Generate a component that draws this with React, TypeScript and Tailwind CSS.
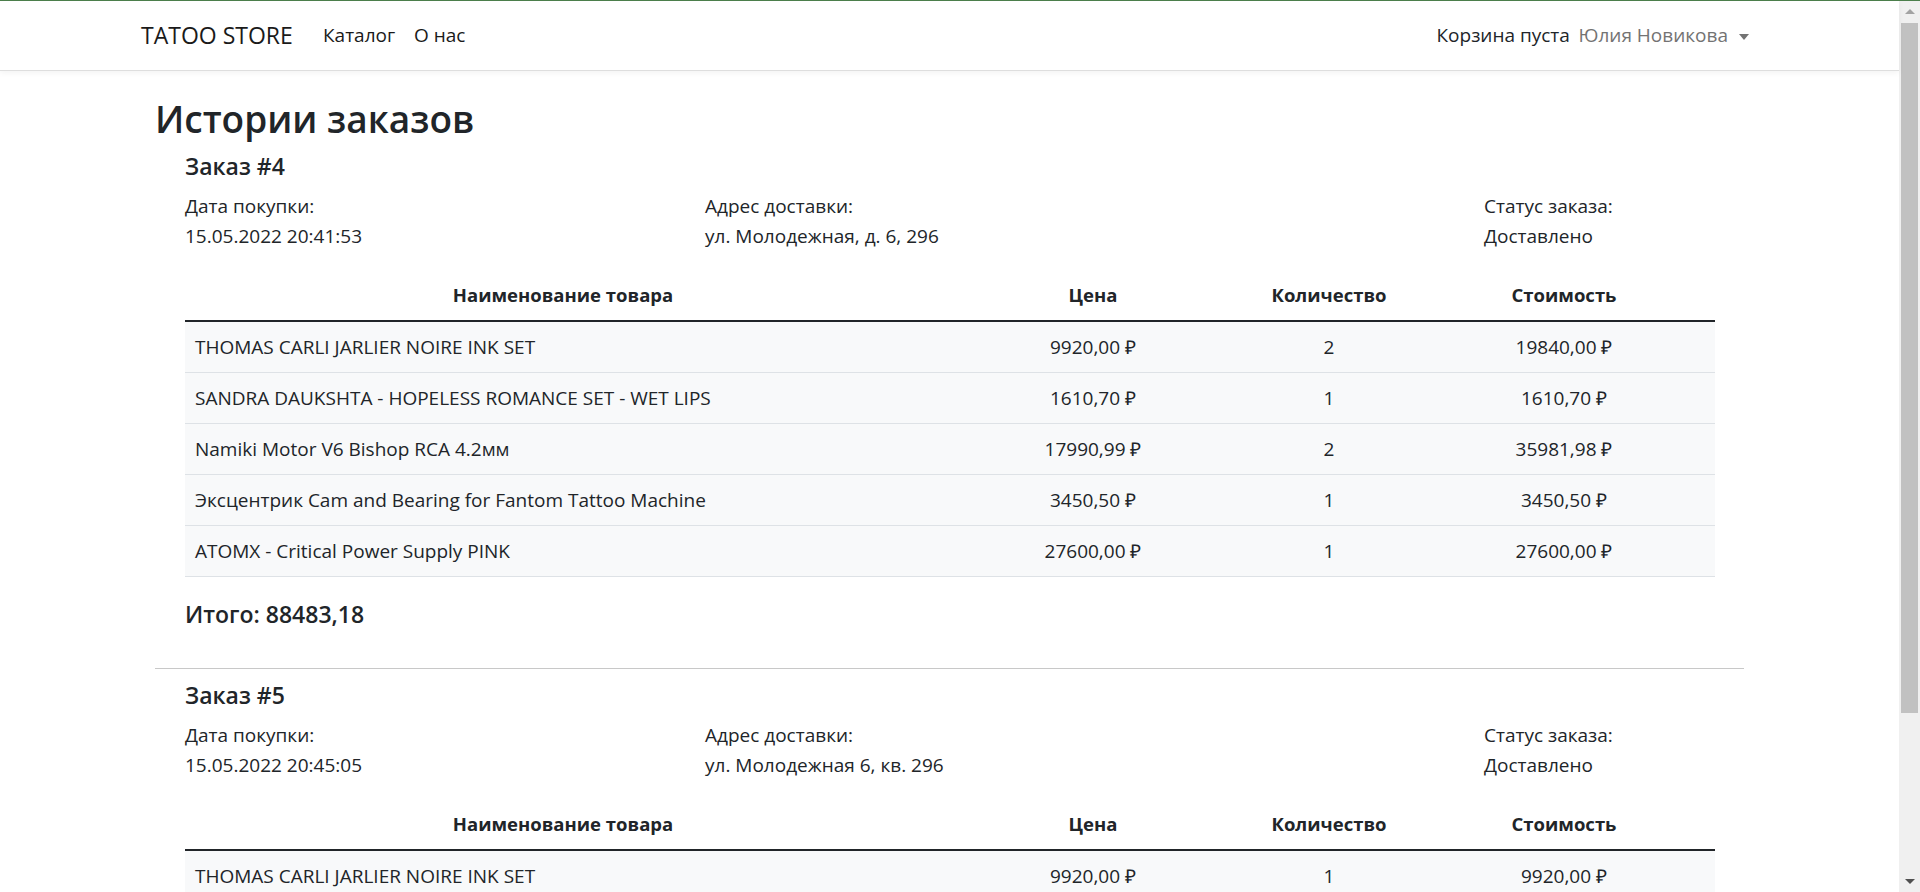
type Item = {
  name: string;
  price: string;
  qty: number;
  cost: string;
};

type Order = {
  id: number;
  date: string;
  address: string;
  status: string;
  items: Item[];
  total: string;
};

const orders: Order[] = [
  {
    id: 4,
    date: '15.05.2022 20:41:53',
    address: 'ул. Молодежная, д. 6, 296',
    status: 'Доставлено',
    items: [
      { name: 'THOMAS CARLI JARLIER NOIRE INK SET', price: '9920,00 ₽', qty: 2, cost: '19840,00 ₽' },
      { name: 'SANDRA DAUKSHTA - HOPELESS ROMANCE SET - WET LIPS', price: '1610,70 ₽', qty: 1, cost: '1610,70 ₽' },
      { name: 'Namiki Motor V6 Bishop RCA 4.2мм', price: '17990,99 ₽', qty: 2, cost: '35981,98 ₽' },
      { name: 'Эксцентрик Cam and Bearing for Fantom Tattoo Machine', price: '3450,50 ₽', qty: 1, cost: '3450,50 ₽' },
      { name: 'ATOMX - Critical Power Supply PINK', price: '27600,00 ₽', qty: 1, cost: '27600,00 ₽' },
    ],
    total: '88483,18',
  },
  {
    id: 5,
    date: '15.05.2022 20:45:05',
    address: 'ул. Молодежная 6, кв. 296',
    status: 'Доставлено',
    items: [
      { name: 'THOMAS CARLI JARLIER NOIRE INK SET', price: '9920,00 ₽', qty: 1, cost: '9920,00 ₽' },
    ],
    total: '9920',
  },
];

const Navbar = () => (
  <nav className="relative z-10 flex h-[70px] items-center border-b border-[#dedede] bg-white pl-[141px] pr-[150px] shadow-[0_2px_6px_rgba(0,0,0,0.05)]">
    <a className="w-[182px] text-[23px] text-[#1a1a1a]">TATOO STORE</a>
    <a className="w-[91px] text-[19px] text-[#1a1a1a]">Каталог</a>
    <a className="text-[19px] text-[#1a1a1a]">О нас</a>
    <div className="ml-auto flex items-center text-[19px]">
      <span className="w-[142px] text-[#212529]">Корзина пуста</span>
      <span className="text-[#737373]">Юлия Новикова</span>
      <span className="ml-[11px] mt-[2px] h-0 w-0 border-x-[5px] border-t-[6px] border-x-transparent border-t-[#737373]" />
    </div>
  </nav>
);

const Scrollbar = () => (
  <div className="flex w-[21px] shrink-0 flex-col bg-[#f0f0f0]">
    <div className="flex h-[21px] items-center justify-center">
      <span className="h-0 w-0 border-x-[5px] border-b-[5px] border-x-transparent border-b-[#a3a3a3]" />
    </div>
    <div className="mx-[2px] mt-[1px] h-[690px] bg-[#c1c1c1]" />
    <div className="flex-1" />
    <div className="flex h-[21px] items-center justify-center">
      <span className="h-0 w-0 border-x-[5px] border-t-[5px] border-x-transparent border-t-[#505050]" />
    </div>
  </div>
);

const cols = 'grid grid-cols-[756px_304px_168px_302px]';

const OrderBlock = ({ order }: { order: Order }) => (
  <section className="pl-[30px] pr-[29px]">
    <h4 className="h-[30px] text-[23px] font-semibold leading-[30px]">Заказ #{order.id}</h4>
    <div className="mt-[10px] grid grid-cols-[520px_779px_1fr] text-[19px] leading-[30px]">
      <div>
        <div>Дата покупки:</div>
        <div>{order.date}</div>
      </div>
      <div>
        <div>Адрес доставки:</div>
        <div>{order.address}</div>
      </div>
      <div>
        <div>Статус заказа:</div>
        <div>{order.status}</div>
      </div>
    </div>
    <div className="mt-[19px] text-[19px]">
      <div className={`${cols} h-[52px] items-center border-b-2 border-[#212529] text-center text-[18.5px] font-bold`}>
        <div>Наименование товара</div>
        <div>Цена</div>
        <div>Количество</div>
        <div>Стоимость</div>
      </div>
      {order.items.map((item, i) => (
        <div key={i} className={`${cols} h-[51px] items-center border-b border-[#dee2e6] bg-[#f8f9fa]`}>
          <div className="pl-[10px]">{item.name}</div>
          <div className="text-center">{item.price}</div>
          <div className="text-center">{item.qty}</div>
          <div className="text-center">{item.cost}</div>
        </div>
      ))}
    </div>
    <h5 className="mt-[22px] h-[30px] text-[23px] font-semibold leading-[30px]">Итого: {order.total}</h5>
  </section>
);

export default function App() {
  return (
    <div className="flex h-screen flex-col overflow-hidden bg-white font-['Open_Sans',sans-serif] text-[#212529]">
      <div className="h-px shrink-0 bg-[#4c7f4c]" />
      <div className="flex min-h-0 flex-1">
        <div className="min-w-0 flex-1">
          <Navbar />
          <main className="pl-[155px] pr-[155px]">
            <h2 className="mt-[24px] text-[37px] font-semibold leading-[48px]">Истории заказов</h2>
            <div className="mt-2">
              <OrderBlock order={orders[0]} />
            </div>
            <hr className="mt-[39px] border-t border-[#c8c8c8]" />
            <div className="mt-[11px]">
              <OrderBlock order={orders[1]} />
            </div>
          </main>
        </div>
        <Scrollbar />
      </div>
    </div>
  );
}
